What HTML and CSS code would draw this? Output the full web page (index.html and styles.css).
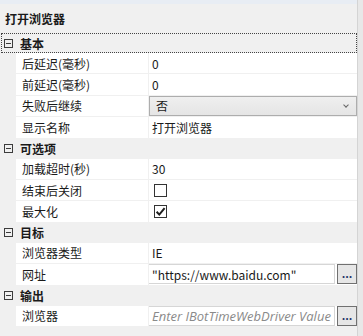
FILE: index.html
```html
<html>
    <head>
        <title>打开浏览器</title>
        <link rel="stylesheet" href="styles.css">
    </head>
    <body>
        <div class="main">
            <div class="top"></div>
            <div class="title">打开浏览器</div>

            <!-- 基本 -->
            <div class="cat focus"><span class="exp"></span>基本</div>
            <div class="prop"><div class="name">后延迟(毫秒)</div><div class="val">0</div></div>
            <div class="prop"><div class="name">前延迟(毫秒)</div><div class="val">0</div></div>
            <div class="prop">
                <div class="name">失败后继续</div>
                <div class="val val-combo"><div class="combo"><span>否</span><span class="chev"></span></div></div>
            </div>
            <div class="prop"><div class="name">显示名称</div><div class="val">打开浏览器</div></div>

            <!-- 可选项 -->
            <div class="cat"><span class="exp"></span>可选项</div>
            <div class="prop"><div class="name">加载超时(秒)</div><div class="val">30</div></div>
            <div class="prop"><div class="name">结束后关闭</div><div class="val"><span class="check"></span></div></div>
            <div class="prop">
                <div class="name">最大化</div>
                <div class="val">
                    <span class="check">
                        <svg width="11" height="11" viewBox="0 0 11 11"><path d="M1.6 5.8 L4.3 8.6 L9.6 2.2" fill="none" stroke="#1e1e1e" stroke-width="2"/></svg>
                    </span>
                </div>
            </div>

            <!-- 目标 -->
            <div class="cat"><span class="exp"></span>目标</div>
            <div class="prop"><div class="name">浏览器类型</div><div class="val">IE</div></div>
            <div class="prop">
                <div class="name">网址</div>
                <div class="val val-edit"><div class="input">"https://www.baidu.com"</div><div class="dots">...</div></div>
            </div>

            <!-- 输出 -->
            <div class="cat"><span class="exp"></span>输出</div>
            <div class="prop">
                <div class="name">浏览器</div>
                <div class="val val-edit"><div class="input hint">Enter IBotTimeWebDriver Value</div><div class="dots">...</div></div>
            </div>
        </div>
        <div class="edge"></div>
    </body>
</html>
```

FILE: styles.css
```css
body {
    margin: 0;
    height: 336px;
    overflow: hidden;
    display: flex;
    background: #f0f0f0;
    color: #1a1a1a;
    font-family: "Noto Sans CJK SC", "Noto Sans", sans-serif;
    font-size: 12px;
}

.main {
    width: 357px;
}

.edge {
    flex: 1;
    border-left: 1px solid #d4d4d4;
    background: #e8e8e8;
}

.top {
    height: 4px;
    background: #e8edf4;
}

.title {
    height: 29px;
    line-height: 29px;
    padding-left: 5px;
    font-weight: bold;
}

.cat {
    height: 20px;
    display: flex;
    align-items: center;
    font-weight: bold;
    box-sizing: border-box;
}

.cat.focus {
    outline: 1px dotted #444;
    outline-offset: -1px;
    margin-left: 1px;
}

.cat.focus .exp {
    margin-left: 3px;
}

.exp {
    position: relative;
    width: 9px;
    height: 9px;
    box-sizing: border-box;
    border: 1px solid #3c3c3c;
    margin: 0 7px 0 4px;
}

.exp::after {
    content: "";
    position: absolute;
    left: 1px;
    right: 1px;
    top: 3px;
    height: 1px;
    background: #3c3c3c;
}

.prop {
    height: 21.4px;
    display: flex;
    margin-left: 16px;
    box-sizing: border-box;
    border-bottom: 1px solid #f0f0f0;
    background: #fff;
}

.name {
    width: 133px;
    padding-left: 6px;
    box-sizing: border-box;
    border-right: 1px solid #f0f0f0;
    display: flex;
    align-items: center;
}

.val {
    flex: 1;
    padding-left: 3px;
    display: flex;
    align-items: center;
}

.val-combo,
.val-edit {
    padding-left: 0;
}

.combo {
    flex: 1;
    height: 100%;
    box-sizing: border-box;
    border: 1px solid #adadad;
    background: linear-gradient(#efefef, #e5e5e5);
    display: flex;
    align-items: center;
    justify-content: space-between;
    padding: 0 8px 0 6px;
}

.chev {
    width: 3px;
    height: 3px;
    border-right: 1px solid #666;
    border-bottom: 1px solid #666;
    transform: rotate(45deg);
    margin-bottom: 2px;
}

.check {
    width: 13px;
    height: 13px;
    box-sizing: border-box;
    border: 1px solid #333;
    margin-left: 2px;
    display: flex;
    align-items: center;
    justify-content: center;
}

.input {
    flex: 1;
    height: 20px;
    box-sizing: border-box;
    border: 1px solid #d6d6d6;
    border-left: none;
    padding-left: 3px;
    display: flex;
    align-items: center;
    white-space: nowrap;
    overflow: hidden;
}

.hint {
    color: #8a8a8a;
    font-family: "Open Sans", sans-serif;
    font-style: italic;
    font-size: 13px;
}

.dots {
    width: 20px;
    height: 20px;
    box-sizing: border-box;
    margin-left: 2px;
    border: 1px solid #707070;
    background: #e6e6e6;
    text-align: center;
    line-height: 17px;
    font-size: 11px;
    font-weight: bold;
    color: #1c3566;
}
```
